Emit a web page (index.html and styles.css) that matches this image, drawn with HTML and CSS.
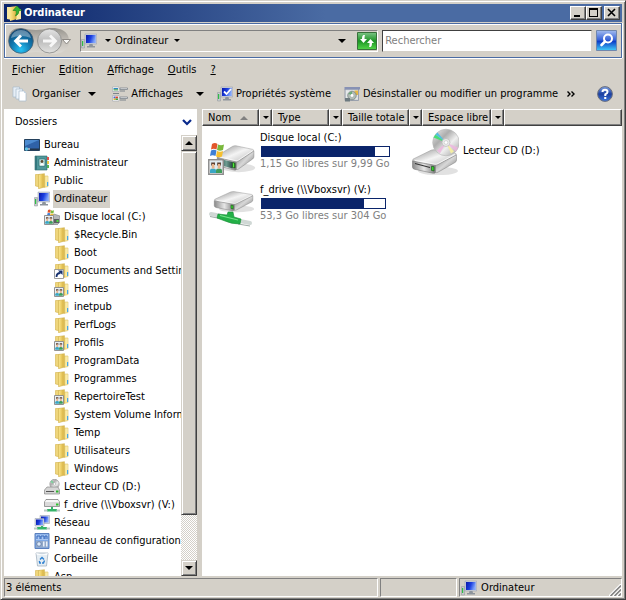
FILE: index.html
```html
<!DOCTYPE html>
<html lang="fr">
<head>
<meta charset="utf-8">
<title>Ordinateur</title>
<link rel="stylesheet" href="styles.css">
</head>
<body>
<svg class="defs" aria-hidden="true">
  <defs>
    <linearGradient id="gold" x1="0" x2="1"><stop offset="0" stop-color="#f9e692"/><stop offset=".4" stop-color="#efd16a"/><stop offset=".8" stop-color="#d9b548"/><stop offset="1" stop-color="#f3dd8a"/></linearGradient>
    <linearGradient id="gold-light" x1="0" x2="1"><stop offset="0" stop-color="#f6dc78"/><stop offset="1" stop-color="#fdf4c4"/></linearGradient>
    <linearGradient id="screen" x1="0" x2="1" y2=".3"><stop offset="0" stop-color="#0a18a8"/><stop offset=".55" stop-color="#1c40e0"/><stop offset="1" stop-color="#7fa4fa"/></linearGradient>
    <linearGradient id="metal" x1="0" y1="0" x2="1" y2="1"><stop offset="0" stop-color="#8e8e8e"/><stop offset=".5" stop-color="#f4f4f4"/><stop offset="1" stop-color="#b4b4b4"/></linearGradient>
    <linearGradient id="front" x1="0" x2="1"><stop offset="0" stop-color="#8a8a8a"/><stop offset=".5" stop-color="#e6e6e6"/><stop offset="1" stop-color="#777"/></linearGradient>
    <linearGradient id="dark-front" x1="0" x2="1"><stop offset="0" stop-color="#2d4f4c"/><stop offset=".5" stop-color="#6f9d92"/><stop offset="1" stop-color="#2b4844"/></linearGradient>
    <linearGradient id="side" x1="0" x2="1" y2="1"><stop offset="0" stop-color="#777"/><stop offset=".5" stop-color="#d8d8d8"/><stop offset="1" stop-color="#666"/></linearGradient>
    <radialGradient id="back-fill" cx=".5" cy=".85" r=".8"><stop offset="0" stop-color="#27c3f5"/><stop offset=".5" stop-color="#1179b0"/><stop offset="1" stop-color="#0c4674"/></radialGradient>
    <linearGradient id="fwd-fill" x2="0" y2="1"><stop offset="0" stop-color="#e4e4e4"/><stop offset=".5" stop-color="#bdbdbd"/><stop offset="1" stop-color="#e2e2e0"/></linearGradient>
    <linearGradient id="pill" x2="0" y2="1"><stop offset="0" stop-color="#97948e"/><stop offset=".5" stop-color="#c4c0b9"/><stop offset="1" stop-color="#dedbd5"/></linearGradient>
    <linearGradient id="disc" x1="0" y1="0" x2="1" y2="1"><stop offset="0" stop-color="#f0f0f0"/><stop offset=".35" stop-color="#adadad"/><stop offset=".6" stop-color="#efefef"/><stop offset="1" stop-color="#9c9c9c"/></linearGradient>
    <linearGradient id="help-fill" x2="0" y2="1"><stop offset="0" stop-color="#7da2e6"/><stop offset=".5" stop-color="#1c3f9f"/><stop offset="1" stop-color="#3f77dd"/></linearGradient>
    <linearGradient id="refresh-fill" x2="0" y2="1"><stop offset="0" stop-color="#7cc486"/><stop offset=".5" stop-color="#1c9425"/><stop offset="1" stop-color="#52d648"/></linearGradient>
    <linearGradient id="find-fill" x2="0" y2="1"><stop offset="0" stop-color="#a2bcf0"/><stop offset=".45" stop-color="#3b66d8"/><stop offset=".55" stop-color="#0d3fc8"/><stop offset="1" stop-color="#41cdf8"/></linearGradient>
  </defs>

  <symbol id="flag" viewBox="0 0 16 16">
    <path fill="#e2562b" d="M3 2q3-2 5.500 0l-1 5.500q-3-1.500-5.500 0z"/>
    <path fill="#79b83c" d="M9 2.500q3 1.500 6 0l-1 5.500q-3 1.500-6 0z"/>
    <path fill="#3f7fd4" d="M2 8.500q3-1.500 5.500 0l-1 5.500q-3-1.500-5.500 0z"/>
    <path fill="#f6bf2e" d="M8 9q3 1.500 6 0l-1 5.500q-3 1.500-6 0z"/>
  </symbol>
  <symbol id="users" viewBox="0 0 16 16">
    <path fill="#fff" stroke="#8c8c8c" stroke-width="1.500" d="M.8.8h14.400v14.400H.8z"/>
    <path fill="#dfeaf0" d="M2 2h12v12H2z"/>
    <path fill="#3aa6c4" d="M2 14v-2.500q0-2 3-2t3 2V14z"/><path fill="#3f9c5a" d="M8 14v-2.500q0-2 3-2t3 2V14z"/>
    <path fill="#e8b48c" d="M3.800 5h2.700v4.500H3.800zM9.700 5h2.700v4.500H9.700z"/>
    <path fill="#5f4030" d="M3.200 3.500h3.800v2.500h-.8V5H4v1.500h-.8zM9.200 3.500H13v3h-.8V5H10v1.500h-.8z"/>
  </symbol>
  <symbol id="folder" viewBox="0 0 16 16">
    <path fill="#efd67c" stroke="#d3b24c" stroke-width=".6" d="M1.500 1.500h4l1 12.500-5-1z"/>
    <path fill="#fff" d="M9 2.500h3v11H9z"/>
    <path fill="url(#gold-light)" stroke="#dcbf62" stroke-width=".6" d="M10 3h4v10.500l-4 1z"/>
    <path fill="url(#gold)" stroke="#cfae4a" stroke-width=".6" d="M4.500 1.500l6-.8v13.300l-6 1.700z"/>
    <path fill="#45a7e8" d="M13 9h1.200v4H13z"/>
  </symbol>
  <symbol id="folder-link" viewBox="0 0 16 16">
    <use href="#folder"/>
    <path fill="#fff" stroke="#888" stroke-width=".8" d="M.5 6.500h9v9h-9z"/>
    <path fill="none" stroke="#16306e" stroke-width="1.800" d="M2.500 14q0-4 4-4"/><path fill="#16306e" d="M4 7.500h4.500V12z"/>
  </symbol>
  <symbol id="folder-users" viewBox="0 0 16 16">
    <use href="#folder"/><use href="#users" x="0" y="6" width="10" height="10"/>
  </symbol>
  <symbol id="folder-up" viewBox="0 0 16 16">
    <path fill="#f7e69c" d="M1 2h5v13l-5-1z"/><path fill="#f9e9a4" d="M10 4h5v10l-5 1z"/><path fill="url(#gold)" d="M4 2l7-1v13l-7 2z"/>
    <path fill="#35b234" stroke="#16821b" stroke-width=".6" d="M11 1l4.500 4.500H13q0 4-3.500 5.500 1.500-2.500.5-5.500H7z"/>
  </symbol>
  <symbol id="computer" viewBox="0 0 16 16">
    <path fill="#c5c9cc" stroke="#8e9498" stroke-width=".5" d="M.5 6.500h3v8.500h-3z"/><path fill="#2fbd45" d="M1 8h1.200v5H1z"/>
    <path fill="#cdd2de" stroke="#9299a8" stroke-width=".5" d="M4 1h11.700v10H4z"/>
    <path fill="url(#screen)" d="M5 2h9.700v8H5z"/>
    <path fill="#8d949b" d="M8.500 11h3l.5 2h2v1.500H6V13h2z"/>
  </symbol>
  <symbol id="desktop" viewBox="0 0 16 16">
    <path fill="#2f62a8" stroke="#24405c" d="M.5 2.500h15v11H.5z"/><path fill="#4d8bd0" d="M1 3h14L1 9z"/>
    <path fill="#23354a" d="M1 11.500h14V13H1z"/><circle cx="2.500" cy="12" r="1.700" fill="#62c5e8"/><path fill="#fff" d="M4 11.500h2v1H4z"/>
  </symbol>
  <symbol id="person-book" viewBox="0 0 16 16">
    <path fill="#4f989b" stroke="#2c686d" stroke-width=".6" d="M1 1h12v14H1z"/><path fill="#35777e" d="M1 1h2v14H1z"/>
    <path fill="#bfe0de" stroke="#2c686d" stroke-width=".6" d="M5 4h6v7H5z"/><circle cx="8" cy="6.500" r="1.400" fill="#5f4c34"/><path fill="#fff" d="M6 10.500q0-2.500 2-2.500t2 2.500z"/>
    <path fill="#e0524c" d="M13 2h2v3h-2z"/><path fill="#e9c741" d="M13 6h2v3h-2z"/><path fill="#54b456" d="M13 10h2v3h-2z"/>
  </symbol>
  <symbol id="drive-c-small" viewBox="0 0 16 16">
    <path fill="#b4b7b8" stroke="#6b6f70" stroke-width=".5" d="M6 8l4-3 6 2v6l-3 3H8z"/><path fill="#5b6061" d="M10 10h5v4h-5z"/><path fill="#4ddc3e" d="M12.500 11h2v2h-2z"/>
    <use href="#flag" x="2" y="0" width="9" height="8"/><use href="#users" x="0" y="6" width="10" height="10"/>
  </symbol>
  <symbol id="cd-small" viewBox="0 0 16 16">
    <circle cx="10.500" cy="5" r="4.700" fill="url(#disc)" stroke="#8c8c8c" stroke-width=".6"/><path fill="#78d29a" d="M10.500 5L6.300 3 8 1.200z"/><circle cx="10.500" cy="5" r="1.300" fill="#fff" stroke="#999" stroke-width=".5"/>
    <path fill="#d6d6d6" stroke="#777" stroke-width=".6" d="M3 8h11l1.500 3v4H.5v-4z"/><path fill="#555" d="M2 12h8v1H2z"/><path fill="#2cb52c" d="M12 11.500h2.500v2H12z"/>
  </symbol>
  <symbol id="net-drive-small" viewBox="0 0 16 16">
    <path fill="#dadada" stroke="#777" stroke-width=".7" d="M2 2.500h12l1.500 2.500v4.500H.5V5z"/><path fill="#f6f6f6" d="M2 3h12l1 2H1z"/><path fill="#2fc42f" d="M12 6.500h2.500v2H12z"/>
    <path fill="#35b469" d="M7 10h2v2h4v2.500H3V12h4z"/><path fill="#b9c9c4" d="M0 12.500h3.500v2H0zM12.500 12.500H16v2h-3.500z"/>
  </symbol>
  <symbol id="network" viewBox="0 0 16 16">
    <path fill="#d5dae4" stroke="#8c94a6" stroke-width=".5" d="M6 .5h9.500v8H6z"/><path fill="url(#screen)" d="M7 1.500h7.500v6H7z"/>
    <path fill="#d5dae4" stroke="#8c94a6" stroke-width=".5" d="M1 3.500h9v7.500H1z"/><path fill="url(#screen)" d="M2 4.500h7V10H2z"/>
    <path fill="#35b469" d="M7 11h2v1h4v2.500H3V12h4z"/><path fill="#b9c9c4" d="M0 12.500h3.500v2H0zM12.500 12.500H16v2h-3.500z"/>
  </symbol>
  <symbol id="control-panel" viewBox="0 0 16 16">
    <path fill="#7ea9e6" stroke="#5b80be" d="M1 .5h14v15H1z"/><path fill="#a8c6f2" d="M2 1.500h12v5.500H2z"/>
    <path fill="none" stroke="#3769bb" d="M3 6V3h3v3M7 6V3h3v3M11 6V3h2v3"/>
    <path fill="#93a9c8" d="M2 8h12v6.500H2z"/><circle cx="5" cy="11" r="2.200" fill="#dce9f8" stroke="#48679b" stroke-width=".6"/><path fill="#e7f0fb" d="M9 8.500h1.500v5H9zM12 8.500h1.500v5H12z"/>
  </symbol>
  <symbol id="recycle" viewBox="0 0 16 16">
    <path fill="#e5edf3" stroke="#a5b3bf" stroke-width=".8" d="M2 2h12l-1.500 13h-9z"/><path fill="#fafcfd" d="M2 2l6 1.500L14 2l-1 2H3z"/>
    <path fill="none" stroke="#2c7fd0" stroke-width="1.400" d="M6 8.500l2-2 2 2M10.500 9.500l-1 2.500H8M7 12H5.800l-.5-2"/>
  </symbol>
  <symbol id="organise" viewBox="0 0 16 16">
    <path fill="#e6eef6" stroke="#a8bacb" stroke-width=".7" d="M1 1h6.500v10H1z"/><path fill="#eef4fa" stroke="#a8bacb" stroke-width=".7" d="M4 3h6.500v10H4z"/><path fill="#fff" stroke="#a8bacb" stroke-width=".7" d="M7 5h5l2 2v8H7z"/><path fill="#c9d8e6" d="M12 5v2h2z"/>
  </symbol>
  <symbol id="views" viewBox="0 0 16 16">
    <path fill="#fff" stroke="#9aa3ab" stroke-width=".6" d="M.5 1h6.500v4.500H.5zM.5 9.500h6.500v5.500H.5z"/>
    <path fill="#2f8ac2" d="M1.500 2h4.500v1.200H1.500z"/><path fill="#50a35b" d="M1.500 3.200h4.500v1.300H1.500z"/>
    <path fill="#4265d6" d="M1.500 10.500h2v2h-2z"/><path fill="#d8482f" d="M3.500 10.500h2.500v2H3.500z"/><path fill="#e4b72d" d="M1.500 12.500h2V14h-2z"/><path fill="#3da54b" d="M3.500 12.500h2.500V14H3.500z"/>
    <path fill="#f2f2f2" stroke="#7c848b" stroke-width=".8" d="M8 2h7.500v1.500H8zM8 11h7.500v1.500H8z"/><path stroke="#7c848b" d="M8 5h5M8 14h6M1 7.500h6"/>
  </symbol>
  <symbol id="sys-props" viewBox="0 0 16 16">
    <use href="#computer"/><path fill="none" stroke="#fff" stroke-width="1.800" d="M7 5.500L9.500 8 14 3"/>
  </symbol>
  <symbol id="programs" viewBox="0 0 16 16">
    <path fill="#d6dadd" stroke="#8a93a5" stroke-width=".8" d="M1 3h13.500v11.500H1z"/><path fill="#8791b4" d="M.5 1H16v2.500H.5z"/><path fill="#e6e9ea" d="M2 4.500h11.500V13H2z"/>
    <path fill="#e8b944" d="M10.500 4.500h3.500v4.500h-3.500z"/><circle cx="8" cy="9.500" r="4.300" fill="#b2bcb6" stroke="#6f7b78" stroke-width=".7"/><path fill="#6cab78" d="M8 9.500L4.200 7.500 8 5.200z"/><circle cx="8" cy="9.500" r="1.400" fill="#fff"/><path fill="#6d7a80" d="M1 12h5v3.500H1z"/>
  </symbol>
  <symbol id="caret" viewBox="0 0 8 4"><path d="M0 0h8L4 4z"/></symbol>

  <symbol id="drive-body" viewBox="0 0 48 32" preserveAspectRatio="none">
    <ellipse cx="27" cy="26" rx="20" ry="5" fill="#c9c9c9" opacity=".55"/>
    <path fill="url(#metal)" stroke="#9a9a9a" stroke-width=".6" d="M2 12L20 1.500q2-1 4-.6l20 4.100q2 .6 1 2L28 18q-2 1.500-4.500 1L3 14.500Q1 14 2 12z"/>
    <path fill="url(#front)" stroke="#777" stroke-width=".6" d="M1.500 14q1 1 23 5.500V28q-1 1-3 .6L3.500 24q-2-.6-2-2.500z"/>
    <path fill="url(#side)" stroke="#777" stroke-width=".5" d="M24.500 19.500q2-.5 4-2L45.500 7v6q0 2-1.500 3L27 27.500q-1 .8-2.500.5z"/>
    <path fill="none" stroke="#fff" stroke-width=".8" d="M4 13.500l20 4.500q2 .2 3-.8L44 6.500"/>
    <path fill="#35d42b" stroke="#1d4a1d" stroke-width=".7" d="M20.500 20.500l2.500.5v5l-2.500-.6z"/>
  </symbol>
  <symbol id="drive-c" viewBox="0 0 48 48">
    <use href="#drive-body" x="8" y="18" width="40" height="28"/>
    <path fill="url(#dark-front)" d="M12 32l12.500 3v6.500L12 38z"/><path fill="#51ef3c" stroke="#164018" stroke-width=".6" d="M24.500 35.500l2 .5v5l-2-.5z"/>
    <use href="#flag" x="1" y="15" width="16" height="16"/><use href="#users" x="0" y="32" width="16" height="16"/>
  </symbol>
  <symbol id="drive-net" viewBox="0 0 48 48">
    <use href="#drive-body" x="5" y="12" width="42" height="22"/>
    <path stroke="#d0d8d5" stroke-width="4" stroke-linecap="round" d="M3 35l8 1.500M32 42l10 2"/>
    <path stroke="#9eaba6" stroke-width="1" d="M2 37.500l10 2M30 45l12 2"/>
    <path fill="#23b047" stroke="#168b34" stroke-width=".6" d="M10 35l9 1 1-3h5l1 5 7 2-1 5q-9 0-15-3l-8-3z"/>
    <path fill="none" stroke="#75e28b" stroke-width="1.200" d="M12 36.500l18 4.500"/>
  </symbol>
  <symbol id="drive-cd" viewBox="0 0 48 48">
    <use href="#drive-body" x="0" y="22" width="48" height="27"/>
    <path fill="none" stroke="#333" stroke-width="1.200" d="M4 36.500l15 4"/>
    <circle cx="35" cy="15.500" r="13.300" fill="url(#disc)" stroke="#b5b5b5" stroke-width=".6"/>
    <path fill="#47df78" d="M35 15.500L22.500 10.500l2-3z"/><path fill="#52bfe0" d="M35 15.500L24.500 7.500l2-2z"/><path fill="#eeb5df" d="M35 15.500l12 5-2 4zM35 15.500l-9 8 3 3z" opacity=".8"/><path fill="#f4eda3" d="M35 15.500l5 11 3-2z"/>
    <circle cx="35" cy="15.500" r="4" fill="#e9e9e9" stroke="#b2b2b2" stroke-width=".6"/><circle cx="35" cy="15.500" r="1.800" fill="#fff" stroke="#bbb" stroke-width=".5"/>
  </symbol>
</svg>

<div class="window">
  <header class="titlebar">
    <svg class="icon"><use href="#folder-up"/></svg>
    <h1>Ordinateur</h1>
    <div class="win-buttons">
      <button type="button" aria-label="Réduire"><svg viewBox="0 0 12 10"><path d="M2 7h6v2H2z"/></svg></button>
      <button type="button" aria-label="Agrandir"><svg viewBox="0 0 12 10"><path fill-rule="evenodd" d="M1 0h9v9H1zM2 2v6h7V2z"/></svg></button>
      <button type="button" class="close" aria-label="Fermer"><svg viewBox="0 0 12 10"><path fill="none" stroke="#000" stroke-width="1.600" d="M2 1l7 7M9 1L2 8"/></svg></button>
    </div>
  </header>

  <div class="navbar">
    <div class="travel">
      <svg class="travel-art" viewBox="0 0 64 28">
        <path fill="url(#pill)" d="M13 1q16 4 28 0h6q14 2 14 13T47 27h-6q-12-4-28 0Q0 27 0 14T13 1z"/>
        <circle cx="13" cy="14" r="12.300" fill="url(#back-fill)" stroke="#4c5f6e" stroke-width=".8"/><path fill="#fff" opacity=".35" d="M3 11q2-8 10-8t10 8q-10-4-20 0z"/>
        <path fill="none" stroke="#fff" stroke-width="2.800" d="M20 14H8M13 8.500L7.500 14l5.500 5.500"/>
        <circle cx="41.500" cy="14" r="12" fill="url(#fwd-fill)" stroke="#8e8e8c" stroke-width=".9"/>
        <path fill="none" stroke="#f7f7f7" stroke-width="2.800" d="M35 14h12M42 8.500l5.500 5.500-5.500 5.500"/>
        <path fill="#f8f8f6" stroke="#77746e" stroke-width=".8" d="M54.500 12.500h8L58.500 17z"/>
      </svg>
      <button type="button" aria-label="Précédent"></button>
      <button type="button" aria-label="Suivant"></button>
    </div>
    <div class="address">
      <svg class="icon"><use href="#computer"/></svg>
      <svg class="caret small"><use href="#caret"/></svg>
      <button type="button" class="crumb">Ordinateur</button>
      <svg class="caret small"><use href="#caret"/></svg>
      <button type="button" class="history" aria-label="Emplacements précédents"><svg class="caret"><use href="#caret"/></svg></button>
      <button type="button" class="refresh" aria-label="Actualiser">
        <svg viewBox="0 0 20 18"><path fill="url(#refresh-fill)" stroke="#38703b" d="M.5.500h19v17H.5z"/><path fill="#fff" d="M8 3H6.500Q5 3.500 5 7H3l3.500 4L10 7H7.500Q7.500 4 8 3zM12 15h1.500q1.500-.5 1.500-4h2l-3.500-4L10 11h2.500q0 3-.5 4z"/></svg>
      </button>
    </div>
    <input class="search" type="search" placeholder="Rechercher" aria-label="Rechercher">
    <button type="button" class="find" aria-label="Lancer la recherche">
      <svg viewBox="0 0 21 21"><path fill="url(#find-fill)" stroke="#7087ad" d="M.5.500h20v20H.5z"/><circle cx="12" cy="8.500" r="4" fill="none" stroke="#fff" stroke-width="2"/><path stroke="#fff" stroke-width="2.600" stroke-linecap="round" d="M9 11.500L5.500 15"/></svg>
    </button>
  </div>

  <nav class="menubar">
    <button type="button"><u>F</u>ichier</button>
    <button type="button"><u>E</u>dition</button>
    <button type="button"><u>A</u>ffichage</button>
    <button type="button"><u>O</u>utils</button>
    <button type="button"><u>?</u></button>
  </nav>

  <div class="toolbar">
    <button type="button" class="organise"><svg class="icon"><use href="#organise"/></svg>Organiser<svg class="caret"><use href="#caret"/></svg></button>
    <button type="button" class="views"><svg class="icon"><use href="#views"/></svg>Affichages<svg class="caret"><use href="#caret"/></svg></button>
    <button type="button"><svg class="icon"><use href="#sys-props"/></svg>Propriétés système</button>
    <button type="button"><svg class="icon"><use href="#programs"/></svg>Désinstaller ou modifier un programme</button>
    <button type="button" class="more" aria-label="Autres commandes"><svg viewBox="0 0 8 6"><path fill="none" stroke="#000" stroke-width="1.400" d="M.5.500L3 3 .5 5.500M4.500.5L7 3 4.500 5.500"/></svg></button>
    <button type="button" class="help" aria-label="Aide"><svg viewBox="0 0 16 16"><circle cx="8" cy="8" r="7.400" fill="url(#help-fill)" stroke="#6c6f7a"/><path fill="none" stroke="#fff" stroke-width="2" d="M5.500 6q0-2.300 2.500-2.300T10.500 6Q10.500 7.300 8.300 8.400V10"/><path fill="#fff" d="M7.200 11h2.100v2H7.200z"/></svg></button>
  </div>

  <main class="content">
    <aside class="folders">
      <header class="folders-head">
        <h2>Dossiers</h2>
        <button type="button" aria-label="Masquer les dossiers"><svg viewBox="0 0 10 7"><path fill="none" stroke="#0a2a8c" stroke-width="2.200" d="M1 1l4 4 4-4"/></svg></button>
      </header>
      <div class="tree-area">
        <ul class="tree">
          <li><a href="#bureau"><svg class="icon"><use href="#desktop"/></svg><span>Bureau</span></a>
            <ul>
              <li><a href="#admin"><svg class="icon"><use href="#person-book"/></svg><span>Administrateur</span></a></li>
              <li><a href="#public"><svg class="icon"><use href="#folder"/></svg><span>Public</span></a></li>
              <li><a href="#ordinateur" class="selected"><svg class="icon"><use href="#computer"/></svg><span>Ordinateur</span></a>
                <ul>
                  <li><a href="#c"><svg class="icon"><use href="#drive-c-small"/></svg><span>Disque local (C:)</span></a>
                    <ul>
                      <li><a href="#recycle-bin"><svg class="icon"><use href="#folder"/></svg><span>$Recycle.Bin</span></a></li>
                      <li><a href="#boot"><svg class="icon"><use href="#folder"/></svg><span>Boot</span></a></li>
                      <li><a href="#documents"><svg class="icon"><use href="#folder-link"/></svg><span>Documents and Settings</span></a></li>
                      <li><a href="#homes"><svg class="icon"><use href="#folder-users"/></svg><span>Homes</span></a></li>
                      <li><a href="#inetpub"><svg class="icon"><use href="#folder"/></svg><span>inetpub</span></a></li>
                      <li><a href="#perflogs"><svg class="icon"><use href="#folder"/></svg><span>PerfLogs</span></a></li>
                      <li><a href="#profils"><svg class="icon"><use href="#folder-users"/></svg><span>Profils</span></a></li>
                      <li><a href="#programdata"><svg class="icon"><use href="#folder"/></svg><span>ProgramData</span></a></li>
                      <li><a href="#programmes"><svg class="icon"><use href="#folder"/></svg><span>Programmes</span></a></li>
                      <li><a href="#repertoiretest"><svg class="icon"><use href="#folder-users"/></svg><span>RepertoireTest</span></a></li>
                      <li><a href="#svi"><svg class="icon"><use href="#folder"/></svg><span>System Volume Information</span></a></li>
                      <li><a href="#temp"><svg class="icon"><use href="#folder"/></svg><span>Temp</span></a></li>
                      <li><a href="#utilisateurs"><svg class="icon"><use href="#folder"/></svg><span>Utilisateurs</span></a></li>
                      <li><a href="#windows"><svg class="icon"><use href="#folder"/></svg><span>Windows</span></a></li>
                    </ul>
                  </li>
                  <li><a href="#d"><svg class="icon"><use href="#cd-small"/></svg><span>Lecteur CD (D:)</span></a></li>
                  <li><a href="#v"><svg class="icon"><use href="#net-drive-small"/></svg><span>f_drive (\\Vboxsvr) (V:)</span></a></li>
                </ul>
              </li>
              <li><a href="#reseau"><svg class="icon"><use href="#network"/></svg><span>Réseau</span></a></li>
              <li><a href="#panneau"><svg class="icon"><use href="#control-panel"/></svg><span>Panneau de configuration</span></a></li>
              <li><a href="#corbeille"><svg class="icon"><use href="#recycle"/></svg><span>Corbeille</span></a></li>
              <li><a href="#asp"><svg class="icon"><use href="#folder"/></svg><span>Asp</span></a></li>
            </ul>
          </li>
        </ul>
        <div class="scrollbar">
          <button type="button" aria-label="Défiler vers le haut"><svg viewBox="0 0 8 4"><path d="M0 4h8L4 0z"/></svg></button>
          <div class="thumb"></div>
          <div class="track"></div>
          <button type="button" aria-label="Défiler vers le bas"><svg viewBox="0 0 8 4"><path d="M0 0h8L4 4z"/></svg></button>
        </div>
      </div>
    </aside>

    <section class="files">
      <div class="columns">
        <button type="button" class="col name">Nom<svg viewBox="0 0 8 4"><path fill="#808080" d="M0 4h8L4 0z"/></svg></button><button type="button" class="drop" aria-label="Filtrer par nom"><svg class="caret small"><use href="#caret"/></svg></button>
        <button type="button" class="col type">Type</button><button type="button" class="drop" aria-label="Filtrer par type"><svg class="caret small"><use href="#caret"/></svg></button>
        <button type="button" class="col size">Taille totale</button><button type="button" class="drop" aria-label="Filtrer par taille"><svg class="caret small"><use href="#caret"/></svg></button>
        <button type="button" class="col free">Espace libre</button><button type="button" class="drop" aria-label="Filtrer par espace libre"><svg class="caret small"><use href="#caret"/></svg></button>
        <span class="rest"></span>
      </div>
      <div class="tiles">
        <article class="tile">
          <svg class="drive"><use href="#drive-c"/></svg>
          <div class="info"><h3>Disque local (C:)</h3><div class="bar"><div style="width:89%"></div></div><p>1,15 Go libres sur 9,99 Go</p></div>
        </article>
        <article class="tile">
          <svg class="drive"><use href="#drive-cd"/></svg>
          <div class="info"><h3>Lecteur CD (D:)</h3></div>
        </article>
        <article class="tile">
          <svg class="drive"><use href="#drive-net"/></svg>
          <div class="info"><h3>f_drive (\\Vboxsvr) (V:)</h3><div class="bar"><div style="width:83%"></div></div><p>53,3 Go libres sur 304 Go</p></div>
        </article>
      </div>
    </section>
  </main>

  <footer class="status">
    <span class="count">3 éléments</span>
    <span class="spare"></span>
    <span class="zone"><svg class="icon"><use href="#computer"/></svg>Ordinateur<svg class="grip" viewBox="0 0 12 12"><path stroke="#fff" stroke-width="1.500" d="M0 12L12 0M4 12l8-8M8 12l4-4"/><path stroke="#808080" stroke-width="1.500" d="M1.500 12L12 1.500M5.500 12L12 5.500M9.500 12L12 9.500"/></svg></span>
  </footer>
</div>
</body>
</html>
```

FILE: styles.css
```css
:root {
  --face: #d4d0c8;
  --shadow: #808080;
  --dark: #404040;
  --blue: #4a6ba3;
  --navy: #0a246a;
}

* { box-sizing: border-box; }

body {
  margin: 0;
  font: 11px/14px "DejaVu Sans Condensed", "Noto Sans", sans-serif;
  color: #000;
}

h1, h2, h3, p, ul {
  margin: 0;
  padding: 0;
  font: inherit;
  list-style: none;
}

button {
  display: flex;
  align-items: center;
  margin: 0;
  padding: 0;
  border: 0;
  background: none;
  font: inherit;
  color: inherit;
  white-space: nowrap;
}

svg { display: block; flex: none; }
.defs { position: absolute; width: 0; height: 0; }
.icon { width: 16px; height: 16px; }
.caret { width: 8px; height: 4px; }
.caret.small { width: 6px; height: 3px; }

.window {
  display: flex;
  flex-direction: column;
  height: 100vh;
  padding: 2px;
  background: var(--face);
  border: 1px solid;
  border-color: var(--face) var(--dark) var(--dark) var(--face);
  box-shadow: inset 1px 1px #fff, inset -1px -1px var(--shadow);
}
.window > * { margin: 0 1px; }

/* Title bar */
.titlebar {
  display: flex;
  align-items: center;
  gap: 2px;
  flex: none;
  height: 18px;
  margin-top: 1px;
  padding: 0 2px;
  background: linear-gradient(90deg, var(--navy), var(--blue) 52%);
  color: #fff;
}
.titlebar h1 { flex: 1; font-weight: bold; }
.win-buttons { display: flex; }
.win-buttons button {
  justify-content: center;
  width: 16px;
  height: 14px;
  background: var(--face);
  border: 1px solid;
  border-color: #fff var(--dark) var(--dark) #fff;
  box-shadow: inset -1px -1px var(--shadow);
}
.win-buttons svg { width: 12px; height: 10px; }
.win-buttons .close { margin-left: 2px; }

/* Address row */
.navbar {
  display: flex;
  align-items: center;
  flex: none;
  height: 35px;
  margin-top: 1px;
  padding: 0 4px 0 3px;
  border: 1px solid var(--blue);
  box-shadow: inset 1px 1px #fff, 0 1px #fff, 1px 0 #fff;
}
.travel { position: relative; display: flex; width: 64px; height: 28px; margin-right: 8px; }
.travel-art { position: absolute; inset: 0; width: 64px; height: 28px; }
.travel button { position: relative; width: 28px; }
.address {
  display: flex;
  align-items: center;
  flex: 298;
  height: 22px;
  border: 1px solid;
  border-color: var(--shadow) #fff #fff var(--shadow);
}
.address .icon { margin-right: 8px; }
.crumb { padding: 0 6px 0 4px; }
.history { margin: 0 11px 0 auto; }
.refresh svg { width: 20px; height: 18px; }
.search {
  flex: 205;
  min-width: 0;
  height: 22px;
  margin: 0 4px;
  padding: 0 2px;
  border: 1px solid;
  border-color: var(--dark) var(--face) var(--face) var(--dark);
  border-radius: 0;
  background: #fff;
  font: inherit;
  appearance: none;
}
.search::placeholder { color: #808080; opacity: 1; }
.find svg { width: 21px; height: 21px; }

/* Menus and commands */
.menubar {
  display: flex;
  gap: 14px;
  flex: none;
  height: 23px;
  padding: 0 8px;
}
.toolbar {
  display: flex;
  align-items: center;
  flex: none;
  height: 28px;
  padding: 0 9px 2px 8px;
}
.toolbar button { gap: 3px; margin-right: 13px; }
.toolbar .organise { gap: 4px; margin-right: 16px; }
.toolbar .organise .caret { margin-left: 4px; }
.toolbar .views .caret { margin-left: 10px; }
.toolbar .more { margin: 0 auto 0 -4px; }
.more svg { width: 8px; height: 6px; }
.toolbar .help { margin: 0; }
.help svg { width: 16px; height: 16px; }

/* Panes */
.content { display: flex; gap: 5px; flex: 1; min-height: 0; }
.folders {
  display: flex;
  flex-direction: column;
  flex: none;
  width: 193px;
  background: #fff;
}
.folders-head {
  display: flex;
  align-items: center;
  justify-content: space-between;
  flex: none;
  height: 26px;
  padding: 0 5px 0 11px;
}
.folders-head svg { width: 10px; height: 7px; }
.tree-area { display: flex; flex: 1; min-height: 0; }
.tree { flex: 1; min-width: 0; overflow: hidden; padding: 1px 0 0 20px; }
.tree ul { padding-left: 10px; }
.tree a {
  display: flex;
  align-items: center;
  gap: 3px;
  height: 18px;
  color: inherit;
  text-decoration: none;
  white-space: nowrap;
}
.tree span { padding: 2px 3px 2px 1px; }
.tree .selected span { background: var(--face); }

.scrollbar { display: flex; flex-direction: column; flex: none; width: 16px; }
.scrollbar button, .thumb {
  justify-content: center;
  background: var(--face);
  border: 1px solid;
  border-color: var(--face) var(--dark) var(--dark) var(--face);
  box-shadow: inset 1px 1px #fff, inset -1px -1px var(--shadow);
}
.scrollbar button { flex: none; height: 16px; }
.scrollbar svg { width: 8px; height: 4px; }
.thumb { flex: 364; }
.track {
  flex: 45;
  background: repeating-conic-gradient(#fff 0 25%, var(--face) 0 50%) 0 0 / 2px 2px;
}

.files {
  display: flex;
  flex-direction: column;
  flex: 1;
  min-width: 0;
  background: #fff;
}
.columns { display: flex; flex: none; height: 17px; }
.columns > * {
  height: 17px;
  background: var(--face);
  border: 1px solid;
  border-color: #fff var(--dark) var(--dark) #fff;
  box-shadow: inset -1px -1px var(--shadow);
}
.col { gap: 9px; padding: 0 5px; }
.col svg { width: 8px; height: 4px; }
.name, .type { width: 57px; }
.size { width: 67px; }
.free { width: 69px; }
.drop { justify-content: center; width: 13px; }
.rest { flex: 1; }

.tiles {
  display: grid;
  grid-template-columns: repeat(auto-fill, 203px);
  grid-auto-rows: 50px;
  row-gap: 2px;
  padding-left: 6px;
}
.tile { display: flex; align-items: center; gap: 4px; }
.drive { width: 48px; height: 48px; }
.info { white-space: nowrap; }
.info p { color: #808080; }
.bar {
  height: 11px;
  margin: 1px 0 0 1px;
  background: #fff;
  border: 1px solid var(--navy);
}
.bar div { height: 100%; background: var(--navy); }

/* Status bar */
.status { display: flex; gap: 2px; flex: none; height: 21px; padding-top: 2px; }
.status span {
  display: flex;
  align-items: center;
  border: 1px solid;
  border-color: var(--shadow) #fff #fff var(--shadow);
}
.count { flex: 376; padding-left: 1px; }
.spare { flex: 76; }
.zone { flex: 162; gap: 4px; padding-left: 1px; overflow: hidden; }
.grip { width: 12px; height: 12px; margin: auto 0 0 auto; }
```
